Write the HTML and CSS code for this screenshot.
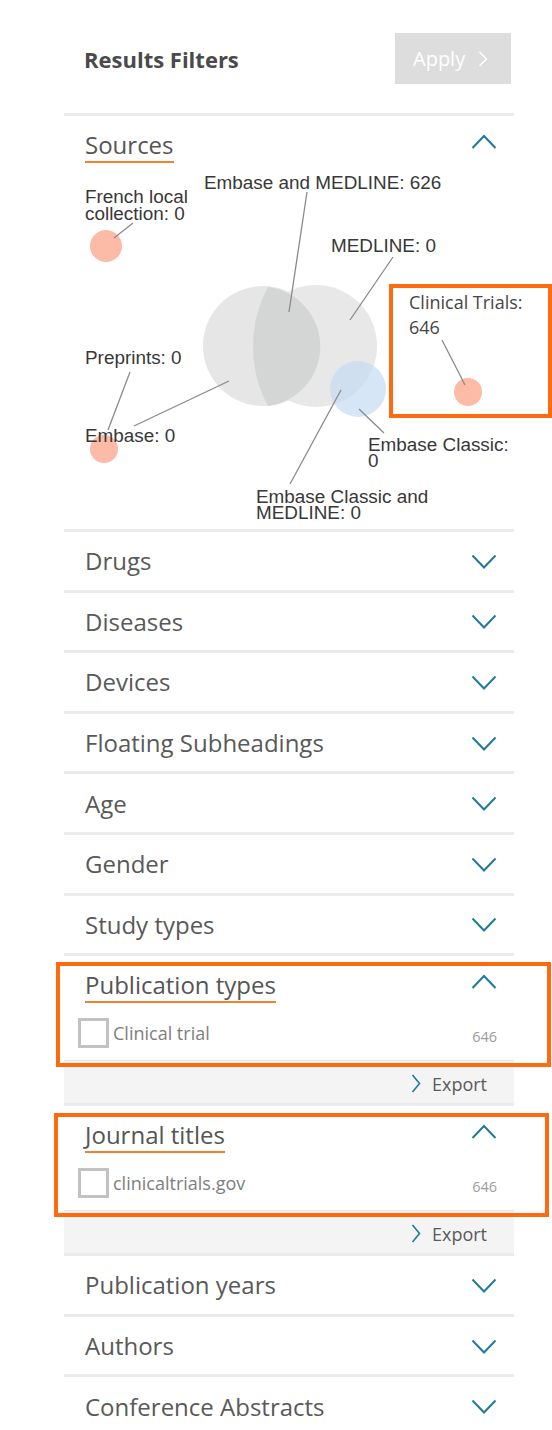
FILE: index.html
```html
<!DOCTYPE html>
<html lang="en">
<head>
<meta charset="utf-8">
<title>Results Filters</title>
<link rel="stylesheet" href="styles.css">
</head>
<body>
<div class="panel">
  <div class="header">
    <h1 class="title">Results Filters</h1>
    <button class="apply">Apply
      <svg class="apply-arrow" width="10" height="16" viewBox="0 0 10 16"><polyline points="1.5,1 8.5,8 1.5,15" fill="none" stroke="#fff" stroke-width="1.5"/></svg>
    </button>
  </div>

  <section class="facet">
    <div class="facet-head">
      <span class="facet-title">Sources</span>
      <svg class="chev chev-up" width="26" height="15" viewBox="0 0 26 15"><polyline points="1.5,14 13,2 24.5,14" fill="none" stroke="#1f7a9e" stroke-width="2"/></svg>
    </div>
    <svg class="venn" width="450" height="366" viewBox="64 163 450 366">
      <circle cx="263" cy="346" r="60" fill="#e6e6e6"/>
      <circle cx="316" cy="346" r="61" fill="#e8e8e8"/>
      <path d="M268,287 A125,125 0 0,0 268,406 A60,60 0 0,0 268,287 Z" fill="#d4d5d5"/>
      <circle cx="358" cy="389" r="28" fill="#c5dcf3" fill-opacity="0.7"/>
      <circle cx="106" cy="246" r="16" fill="#fcbba6"/>
      <circle cx="104" cy="449" r="14" fill="#fcbba6"/>
      <circle cx="468" cy="392" r="14" fill="#fcbba6"/>
      <g stroke="#8a8a8a" stroke-width="1.3">
        <line x1="114" y1="238" x2="133" y2="223"/>
        <line x1="307" y1="192" x2="289" y2="312"/>
        <line x1="393" y1="257" x2="350" y2="320"/>
        <line x1="442" y1="340" x2="465" y2="385"/>
        <line x1="130" y1="372" x2="108" y2="430"/>
        <line x1="134" y1="426" x2="229" y2="381"/>
        <line x1="359" y1="409" x2="384" y2="433"/>
        <line x1="290" y1="484" x2="341" y2="390"/>
      </g>
      <g class="vlabel">
        <text x="85" y="203">French local</text>
        <text x="85" y="220">collection: 0</text>
        <text x="204" y="189">Embase and MEDLINE: 626</text>
        <text x="331" y="252">MEDLINE: 0</text>
        <text x="85" y="364">Preprints: 0</text>
        <text x="85" y="442">Embase: 0</text>
        <text x="368" y="451">Embase Classic:</text>
        <text x="368" y="467">0</text>
        <text x="256" y="503">Embase Classic and</text>
        <text x="256" y="519">MEDLINE: 0</text>
      </g>
      <g class="vlabel-ct">
        <text x="409" y="308.5">Clinical Trials:</text>
        <text x="409" y="334">646</text>
      </g>
    </svg>
    <div class="annot annot-ct"></div>
  </section>

  <div class="facet-row"><span class="row-title">Drugs</span><svg class="chev" width="26" height="15" viewBox="0 0 26 15"><polyline points="1.5,1.5 13,13.5 24.5,1.5" fill="none" stroke="#1f7a9e" stroke-width="2"/></svg></div>
  <div class="facet-row"><span class="row-title">Diseases</span><svg class="chev" width="26" height="15" viewBox="0 0 26 15"><polyline points="1.5,1.5 13,13.5 24.5,1.5" fill="none" stroke="#1f7a9e" stroke-width="2"/></svg></div>
  <div class="facet-row"><span class="row-title">Devices</span><svg class="chev" width="26" height="15" viewBox="0 0 26 15"><polyline points="1.5,1.5 13,13.5 24.5,1.5" fill="none" stroke="#1f7a9e" stroke-width="2"/></svg></div>
  <div class="facet-row"><span class="row-title">Floating Subheadings</span><svg class="chev" width="26" height="15" viewBox="0 0 26 15"><polyline points="1.5,1.5 13,13.5 24.5,1.5" fill="none" stroke="#1f7a9e" stroke-width="2"/></svg></div>
  <div class="facet-row"><span class="row-title">Age</span><svg class="chev" width="26" height="15" viewBox="0 0 26 15"><polyline points="1.5,1.5 13,13.5 24.5,1.5" fill="none" stroke="#1f7a9e" stroke-width="2"/></svg></div>
  <div class="facet-row"><span class="row-title">Gender</span><svg class="chev" width="26" height="15" viewBox="0 0 26 15"><polyline points="1.5,1.5 13,13.5 24.5,1.5" fill="none" stroke="#1f7a9e" stroke-width="2"/></svg></div>
  <div class="facet-row"><span class="row-title">Study types</span><svg class="chev" width="26" height="15" viewBox="0 0 26 15"><polyline points="1.5,1.5 13,13.5 24.5,1.5" fill="none" stroke="#1f7a9e" stroke-width="2"/></svg></div>

  <section class="facet">
    <div class="facet-head">
      <span class="facet-title">Publication types</span>
      <svg class="chev chev-up" width="26" height="15" viewBox="0 0 26 15"><polyline points="1.5,14 13,2 24.5,14" fill="none" stroke="#1f7a9e" stroke-width="2"/></svg>
    </div>
    <div class="item">
      <span class="checkbox"></span>
      <span class="item-label">Clinical trial</span>
      <span class="item-count">646</span>
    </div>
    <div class="export">
      <svg class="export-arrow" width="10" height="19" viewBox="0 0 10 19"><polyline points="1.5,1 8.5,9.5 1.5,18" fill="none" stroke="#1f7a9e" stroke-width="1.6"/></svg>
      <span class="export-text">Export</span>
    </div>
    <div class="annot annot-pub"></div>
  </section>

  <section class="facet">
    <div class="facet-head">
      <span class="facet-title">Journal titles</span>
      <svg class="chev chev-up" width="26" height="15" viewBox="0 0 26 15"><polyline points="1.5,14 13,2 24.5,14" fill="none" stroke="#1f7a9e" stroke-width="2"/></svg>
    </div>
    <div class="item">
      <span class="checkbox"></span>
      <span class="item-label">clinicaltrials.gov</span>
      <span class="item-count">646</span>
    </div>
    <div class="export">
      <svg class="export-arrow" width="10" height="19" viewBox="0 0 10 19"><polyline points="1.5,1 8.5,9.5 1.5,18" fill="none" stroke="#1f7a9e" stroke-width="1.6"/></svg>
      <span class="export-text">Export</span>
    </div>
    <div class="annot annot-journal"></div>
  </section>

  <div class="facet-row"><span class="row-title">Publication years</span><svg class="chev" width="26" height="15" viewBox="0 0 26 15"><polyline points="1.5,1.5 13,13.5 24.5,1.5" fill="none" stroke="#1f7a9e" stroke-width="2"/></svg></div>
  <div class="facet-row"><span class="row-title">Authors</span><svg class="chev" width="26" height="15" viewBox="0 0 26 15"><polyline points="1.5,1.5 13,13.5 24.5,1.5" fill="none" stroke="#1f7a9e" stroke-width="2"/></svg></div>
  <div class="facet-row"><span class="row-title">Conference Abstracts</span><svg class="chev" width="26" height="15" viewBox="0 0 26 15"><polyline points="1.5,1.5 13,13.5 24.5,1.5" fill="none" stroke="#1f7a9e" stroke-width="2"/></svg></div>
</div>
</body>
</html>
```

FILE: styles.css
```css
* { box-sizing: border-box; }

html, body {
  margin: 0;
  padding: 0;
  background: #fff;
}

body {
  font-family: "Open Sans", "Noto Sans", sans-serif;
  color: #5a5a5a;
  overflow: hidden;
}

.panel {
  width: 450px;
  margin-left: 64px;
}

.header {
  display: flex;
  align-items: center;
  justify-content: space-between;
  padding: 33px 3px 29px 20px;
  border-bottom: 3px solid #ebebeb;
}

.title {
  margin: 0;
  font-size: 22px;
  font-weight: 700;
  color: #4a4a4a;
  line-height: 28px;
}

.apply {
  display: flex;
  align-items: center;
  gap: 13px;
  width: 116px;
  height: 51px;
  padding: 0 0 0 18px;
  border: none;
  background: #dddddd;
  color: #fff;
  font-family: "Open Sans", "Noto Sans", sans-serif;
  font-size: 20px;
  line-height: 27px;
}

.apply-arrow { display: block; }

.facet {
  position: relative;
  border-bottom: 3px solid #ebebeb;
}

.facet-head {
  display: flex;
  justify-content: space-between;
  align-items: flex-start;
  padding: 13px 17px 0 21px;
}

.facet-title {
  display: inline-block;
  font-size: 24px;
  line-height: 32px;
  color: #555;
  border-bottom: 2px solid #f2812e;
}

.chev { display: block; }
.chev-up { margin-top: 5px; }

.venn {
  display: block;
  overflow: visible;
}

.vlabel text {
  font-family: "Liberation Sans", Arial, sans-serif;
  font-size: 18.9px;
  fill: #383838;
}

.vlabel-ct text {
  font-family: "Open Sans", "Noto Sans", sans-serif;
  font-size: 18px;
  fill: #454545;
}

.annot {
  position: absolute;
  border: 4px solid #ff6a0f;
  pointer-events: none;
}

.annot-ct {
  top: 168px;
  left: 325px;
  width: 163px;
  height: 134px;
}

.annot-pub {
  top: 6px;
  left: -8px;
  width: 495px;
  height: 105px;
}

.annot-journal {
  top: 7px;
  left: -10px;
  width: 495px;
  height: 104px;
}

.facet-row {
  display: flex;
  align-items: center;
  justify-content: space-between;
  height: 60.6px;
  padding: 1px 17px 0 21px;
  border-bottom: 3px solid #ebebeb;
}

.row-title {
  font-size: 24px;
  line-height: 32px;
  color: #595959;
}

.item {
  display: flex;
  align-items: center;
  margin-top: 15px;
  padding: 0 17px 0 14px;
  height: 30px;
  margin-bottom: 12px;
}

.checkbox {
  width: 31px;
  height: 30px;
  border: 3px solid #c2c2c2;
  background: #fff;
  flex: none;
}

.item-label {
  margin-left: 4px;
  font-size: 18px;
  line-height: 24px;
  color: #7e7e7e;
  flex: 1;
}

.item-count {
  padding-top: 7px;
  font-size: 14.5px;
  line-height: 20px;
  color: #9c9c9c;
}

.export {
  display: flex;
  justify-content: flex-end;
  align-items: center;
  gap: 11px;
  height: 43px;
  padding: 3px 27px 0 0;
  background: #f4f4f4;
  border-top: 1px solid #e6e6e6;
}

.export-arrow { display: block; }

.export-text {
  font-size: 18px;
  line-height: 24px;
  color: #5a5a5a;
}
```
